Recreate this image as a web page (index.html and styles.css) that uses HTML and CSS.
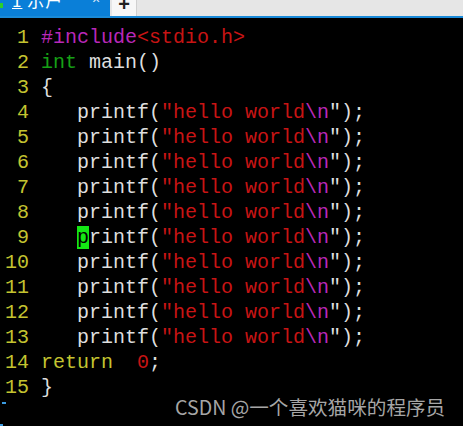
FILE: index.html
```html
<!DOCTYPE html>
<html>
<head>
<meta charset="utf-8">
<link rel="stylesheet" href="styles.css">
</head>
<body>
<div class="tabbar">
  <div class="tab active">
    <span class="dot"></span>
    <span class="tab-title"><u>1</u> 示户</span>
    <span class="tab-close">×</span>
  </div>
  <div class="tab plus">+</div>
  <div class="tab-fill"></div>
</div>
<div class="editor">
<div class="line"><span class="ln"> 1 </span><span class="pp">#include</span><span class="str">&lt;stdio.h&gt;</span></div>
<div class="line"><span class="ln"> 2 </span><span class="ty">int</span> main()</div>
<div class="line"><span class="ln"> 3 </span>{</div>
<div class="line"><span class="ln"> 4 </span>   printf(<span class="str">"hello world</span><span class="pp">\n</span>");</div>
<div class="line"><span class="ln"> 5 </span>   printf(<span class="str">"hello world</span><span class="pp">\n</span>");</div>
<div class="line"><span class="ln"> 6 </span>   printf(<span class="str">"hello world</span><span class="pp">\n</span>");</div>
<div class="line"><span class="ln"> 7 </span>   printf(<span class="str">"hello world</span><span class="pp">\n</span>");</div>
<div class="line"><span class="ln"> 8 </span>   printf(<span class="str">"hello world</span><span class="pp">\n</span>");</div>
<div class="line"><span class="ln"> 9 </span>   <span class="cursor">p</span>rintf(<span class="str">"hello world</span><span class="pp">\n</span>");</div>
<div class="line"><span class="ln">10 </span>   printf(<span class="str">"hello world</span><span class="pp">\n</span>");</div>
<div class="line"><span class="ln">11 </span>   printf(<span class="str">"hello world</span><span class="pp">\n</span>");</div>
<div class="line"><span class="ln">12 </span>   printf(<span class="str">"hello world</span><span class="pp">\n</span>");</div>
<div class="line"><span class="ln">13 </span>   printf(<span class="str">"hello world</span><span class="pp">\n</span>");</div>
<div class="line"><span class="ln">14 </span><span class="kw">return</span>  <span class="str">0</span>;</div>
<div class="line"><span class="ln">15 </span>}</div>
</div>
<span class="mark mark1"></span>
<span class="mark mark2"></span>
<div class="watermark">CSDN @一个喜欢猫咪的程序员</div>
</body>
</html>
```

FILE: styles.css
```css
html, body {
  margin: 0;
  padding: 0;
  background: #000;
  width: 463px;
  height: 426px;
  overflow: hidden;
}

.tabbar {
  display: flex;
  height: 16px;
  border-bottom: 2px solid #1a8ad8;
  background: #e6e6e6;
  overflow: hidden;
}

.tab {
  height: 16px;
  box-sizing: border-box;
}

.tab.active {
  width: 110px;
  background: #0a7fd8;
  position: relative;
  color: #fff;
  display: flex;
  align-items: flex-end;
  font-family: "Noto Sans CJK SC", "Liberation Sans", sans-serif;
}

.dot {
  position: absolute;
  left: 0;
  top: 3px;
  width: 3px;
  height: 5px;
  background: #2bd02b;
}

.tab-title {
  font-size: 17px;
  line-height: 17px;
  margin-left: 12px;
  margin-bottom: 8px;
  letter-spacing: 1px;
}

.tab-title u {
  text-decoration-thickness: 1px;
  text-underline-offset: 1px;
}

.tab-close {
  position: absolute;
  left: 92px;
  top: -8px;
  font-size: 14px;
  line-height: 14px;
  color: #dbe9f7;
  font-family: "Liberation Sans", sans-serif;
}

.tab.plus {
  width: 25px;
  margin-left: 2px;
  background: #f7f7f7;
  border-right: 1px solid #d0d0d0;
  color: #222;
  font-family: "Liberation Sans", sans-serif;
  font-size: 20px;
  font-weight: bold;
  line-height: 8px;
  text-align: center;
  overflow: hidden;
}

.tab-fill {
  flex: 1;
}

.editor {
  padding: 7px 0 0 5px;
  font-family: "Liberation Mono", monospace;
  font-size: 20px;
  line-height: 25px;
  color: #dedede;
}

.line {
  height: 25px;
  white-space: pre;
}

.ln { color: #c4c430; }
.pp { color: #b828b8; }
.str { color: #c81414; }
.ty { color: #16a016; }
.kw { color: #c4c430; }

.cursor {
  background: #14e614;
  color: #000;
}

.mark {
  position: absolute;
  background: #3a9ae0;
  height: 2px;
}

.mark1 { left: 2px; top: 402px; width: 4px; }
.mark2 { left: 0; top: 424px; width: 3px; }

.watermark {
  position: absolute;
  left: 175px;
  top: 395px;
  font-family: "Noto Sans CJK SC", "Liberation Sans", sans-serif;
  font-size: 19.6px;
  line-height: 24px;
  color: #a6a6a6;
  white-space: nowrap;
}
```
